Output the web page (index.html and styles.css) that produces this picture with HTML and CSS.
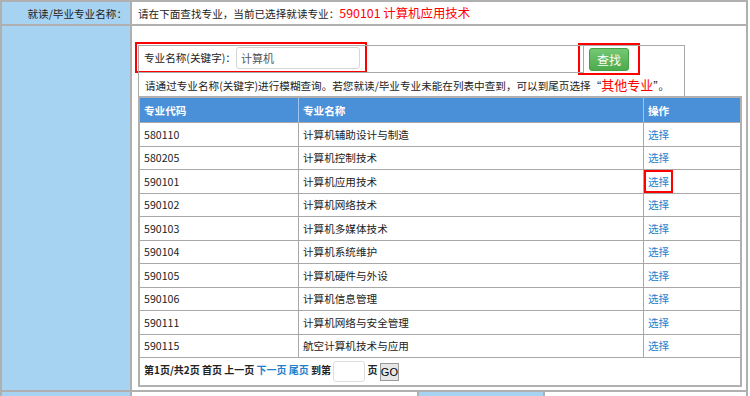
FILE: index.html
```html
<!DOCTYPE html>
<html lang="zh-CN">
<head>
    <meta charset="UTF-8">
    <meta name="viewport" content="width=device-width, initial-scale=1.0">
    <title>就读专业选择</title>
    <link rel="stylesheet" href="styles.css">
</head>
<body>
    <table class="form">
        <colgroup>
            <col class="c1"><col class="c2"><col class="c3"><col class="c4">
        </colgroup>
        <tr class="row-top">
            <th>就读/毕业专业名称：</th>
            <td colspan="3">请在下面查找专业，当前已选择就读专业：<span class="current">590101 计算机应用技术</span></td>
        </tr>
        <tr class="row-main">
            <th></th>
            <td colspan="3" class="search-cell">
                <!-- 查询条件 -->
                <table class="panel">
                    <tr>
                        <td class="kw-cell">
                            <div class="mark mark-kw">专业名称(关键字)：<input type="text" class="kw" value="计算机"></div>
                        </td>
                        <td class="btn-cell">
                            <div class="mark mark-btn"><button class="btn-green">查找</button></div>
                        </td>
                    </tr>
                    <tr>
                        <td colspan="2" class="hint">请通过专业名称(关键字)进行模糊查询。若您就读/毕业专业未能在列表中查到，可以到尾页选择“<span class="other">其他专业</span>”。</td>
                    </tr>
                </table>

                <!-- 查询结果 -->
                <table class="list">
                    <tr class="head">
                        <th class="col-code">专业代码</th>
                        <th class="col-name">专业名称</th>
                        <th>操作</th>
                    </tr>
                    <tr><td>580110</td><td>计算机辅助设计与制造</td><td><a href="#">选择</a></td></tr>
                    <tr><td>580205</td><td>计算机控制技术</td><td><a href="#">选择</a></td></tr>
                    <tr><td>590101</td><td>计算机应用技术</td><td><a href="#" class="picked">选择</a></td></tr>
                    <tr><td>590102</td><td>计算机网络技术</td><td><a href="#">选择</a></td></tr>
                    <tr><td>590103</td><td>计算机多媒体技术</td><td><a href="#">选择</a></td></tr>
                    <tr><td>590104</td><td>计算机系统维护</td><td><a href="#">选择</a></td></tr>
                    <tr><td>590105</td><td>计算机硬件与外设</td><td><a href="#">选择</a></td></tr>
                    <tr><td>590106</td><td>计算机信息管理</td><td><a href="#">选择</a></td></tr>
                    <tr><td>590111</td><td>计算机网络与安全管理</td><td><a href="#">选择</a></td></tr>
                    <tr><td>590115</td><td>航空计算机技术与应用</td><td><a href="#">选择</a></td></tr>
                    <tr class="pager">
                        <td colspan="3">第1页/共2页 首页 上一页 <a href="#">下一页</a> <a href="#">尾页</a> 到第 <input type="text" class="page-no"> 页 <button class="go">GO</button></td>
                    </tr>
                </table>
            </td>
        </tr>
        <tr class="row-bottom">
            <th></th>
            <td></td>
            <th></th>
            <td></td>
        </tr>
    </table>
</body>
</html>
```

FILE: styles.css
```css
body {
    margin: 0;
    font-family: "Noto Sans CJK SC", "Microsoft YaHei", sans-serif;
    font-size: 10.6px;
    color: #222;
    background-color: #fff;
}

.form {
    border-collapse: collapse;
    table-layout: fixed;
    width: 746px;
}

.form col.c1 { width: 130px; }
.form col.c2 { width: 287px; }
.form col.c3 { width: 126px; }
.form col.c4 { width: 203px; }

.form > tbody > tr > th,
.form > tbody > tr > td {
    border: 2px solid #b0b0b0;
    padding: 0;
}

.form > tbody > tr > th {
    background-color: #a7d3f3;
    text-align: right;
    font-weight: normal;
    padding-right: 3px;
}

.row-top th,
.row-top td {
    height: 22px;
}

.row-top td {
    padding-left: 6px !important;
}

.current {
    color: #f00;
    font-size: 12.4px;
}

.row-main td.search-cell {
    vertical-align: top;
    padding: 19px 0 3px 6px;
}

.row-bottom th,
.row-bottom td {
    height: 12px;
}

/* 查询条件 */
.panel {
    border-collapse: collapse;
    width: 547px;
    border: 1px solid #aaa;
    border-bottom: none;
}

.panel td {
    padding: 0;
}

.kw-cell {
    width: 444px;
    height: 26px;
    border-right: 1px solid #aaa;
    border-bottom: 1px solid #aaa;
    vertical-align: top;
}

.btn-cell {
    height: 26px;
    vertical-align: top;
}

.mark {
    display: flex;
    align-items: center;
    width: fit-content;
    border: 2px solid #f00;
    box-sizing: border-box;
}

.mark-kw {
    margin: -4px 0 -1px -4px;
    padding: 0 5px 0 7px;
    height: 31px;
}

.kw {
    width: 124px;
    height: 22px;
    box-sizing: border-box;
    border: 1px solid #d6d6d6;
    border-radius: 3px;
    padding: 0 4px;
    font-family: inherit;
    font-size: 11px;
    color: #555;
}

.mark-btn {
    margin: -3px 0 -6px -6px;
    padding: 3px 9px 2px 9px;
}

.btn-green {
    width: 40px;
    height: 23px;
    border: 1px solid #45a045;
    border-radius: 3px;
    background: linear-gradient(#74c874, #4caa4c);
    color: #fff;
    font-family: inherit;
    font-size: 12px;
    padding: 0;
    display: block;
}

.hint {
    height: 23px;
    padding-left: 6px !important;
    white-space: nowrap;
}

.other {
    color: #f00;
    font-size: 13px;
}

/* 查询结果 */
.list {
    border-collapse: collapse;
    width: 604px;
    border: 2px solid #b0b0b0;
}

.list th,
.list td {
    border: 1px solid #a8a8a8;
    text-align: left;
    padding: 0 0 0 4px;
    height: 22.5px;
}

.list .head th {
    background-color: #4a90d9;
    color: #fff;
    height: 24px;
    border-color: #a8a8a8 #9cc4ee #a8a8a8 #9cc4ee;
}

.col-code { width: 154px; }
.col-name { width: 340px; }

.list a {
    color: #1f7fcc;
    text-decoration: none;
}

.list a.picked {
    outline: 2px solid #f00;
    outline-offset: 2px;
}

.pager td {
    height: 27px;
    font-weight: bold;
    font-size: 10px;
}

.page-no {
    width: 32px;
    height: 21px;
    box-sizing: border-box;
    border: 1px solid #ddd;
    border-radius: 3px;
    vertical-align: middle;
}

.go {
    height: 18px;
    padding: 0;
    border: 1px solid #999;
    background-color: #e6e6e6;
    font-family: "Liberation Sans", Arial, sans-serif;
    font-size: 11px;
    vertical-align: middle;
}
```
